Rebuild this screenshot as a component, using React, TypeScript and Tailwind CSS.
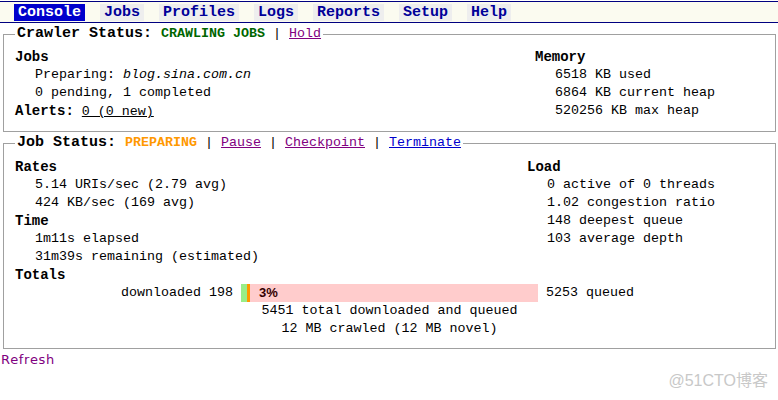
const navItems = ["Console", "Jobs", "Profiles", "Logs", "Reports", "Setup", "Help"];

function Sep() {
  return <span className="text-black font-normal text-[13.333px]"> | </span>;
}

export default function App() {
  return (
    <div className="relative w-[778px] h-[400px] bg-white text-black font-['Liberation_Mono',monospace] text-[13.333px] leading-[18px] overflow-hidden">
      {/* top menu */}
      <div className="mt-[1px] h-[22px] border-y border-[#000080] bg-[#fbfbf0] flex items-end gap-[15px] pl-[14px] pb-[1px]">
        {navItems.map((n, i) => (
          <div
            key={n}
            className={
              i === 0
                ? "h-[17px] px-[4px] bg-[#0000cc] text-white font-bold text-[15px] leading-[17px]"
                : "h-[17px] px-[4px] bg-[#eeeeee] text-[#000099] font-bold text-[15px] leading-[17px]"
            }
          >
            {n}
          </div>
        ))}
      </div>

      {/* crawler status */}
      <fieldset className="mt-[2px] ml-[3px] mr-[2px] border border-[#a0a0a0] px-[11px] pt-[5px] pb-[10px]">
        <legend className="px-[2px] leading-[18px]">
          <span className="font-bold text-[15px]">Crawler Status: </span>
          <span className="font-bold text-[13.333px] text-[#006600]">CRAWLING JOBS</span>
          <Sep />
          <a className="text-[#800080] underline">Hold</a>
        </legend>
        <div className="grid grid-cols-[520px_1fr]">
          <div>
            <div className="font-bold text-[14px]">Jobs</div>
            <div className="pl-[20px]">
              Preparing: <span className="italic">blog.sina.com.cn</span>
            </div>
            <div className="pl-[20px]">0 pending, 1 completed</div>
            <div>
              <span className="font-bold text-[14px]">Alerts:</span>{" "}
              <span className="underline">0 (0 new)</span>
            </div>
          </div>
          <div>
            <div className="font-bold text-[14px]">Memory</div>
            <div className="pl-[20px]">6518 KB used</div>
            <div className="pl-[20px]">6864 KB current heap</div>
            <div className="pl-[20px]">520256 KB max heap</div>
          </div>
        </div>
      </fieldset>

      {/* job status */}
      <fieldset className="mt-[2px] ml-[3px] mr-[2px] border border-[#a0a0a0] px-[11px] pt-[6px] pb-[10px]">
        <legend className="px-[2px] leading-[18px]">
          <span className="font-bold text-[15px]">Job Status: </span>
          <span className="font-bold text-[13.333px] text-[#ff9900]">PREPARING</span>
          <Sep />
          <a className="text-[#800080] underline">Pause</a>
          <Sep />
          <a className="text-[#800080] underline">Checkpoint</a>
          <Sep />
          <a className="text-[#0000cc] underline">Terminate</a>
        </legend>
        <div className="grid grid-cols-[512px_1fr]">
          <div>
            <div className="font-bold text-[14px]">Rates</div>
            <div className="pl-[20px]">5.14 URIs/sec (2.79 avg)</div>
            <div className="pl-[20px]">424 KB/sec (169 avg)</div>
            <div className="font-bold text-[14px]">Time</div>
            <div className="pl-[20px]">1m11s elapsed</div>
            <div className="pl-[20px]">31m39s remaining (estimated)</div>
          </div>
          <div>
            <div className="font-bold text-[14px]">Load</div>
            <div className="pl-[20px]">0 active of 0 threads</div>
            <div className="pl-[20px]">1.02 congestion ratio</div>
            <div className="pl-[20px]">148 deepest queue</div>
            <div className="pl-[20px]">103 average depth</div>
          </div>
        </div>
        <div className="font-bold text-[14px]">Totals</div>
        <div className="flex items-center">
          <div className="w-[226px] text-right pr-[8px]">downloaded 198</div>
          <div className="flex w-[297px] h-[18px]">
            <div className="w-[6px] bg-[#99ee88]" />
            <div className="w-[3px] bg-[#ff9900]" />
            <div className="flex-1 bg-[#ffcccc] pl-[9px] font-bold text-[#330000] font-['Liberation_Sans',sans-serif] text-[13px]">
              3%
            </div>
          </div>
          <div className="pl-[8px]">5253 queued</div>
        </div>
        <div className="ml-[226px] w-[297px] text-center">
          <div>5451 total downloaded and queued</div>
          <div>12 MB crawled (12 MB novel)</div>
        </div>
      </fieldset>

      <a className="block mt-[2px] pl-[1px] text-[#800080] font-['DejaVu_Sans',sans-serif] text-[13px] tracking-[0.7px] leading-[18px]">
        Refresh
      </a>

      <div className="absolute right-[10px] top-[371px] text-[#c8c8c8] text-[16px] leading-[20px] font-['Liberation_Sans','Noto_Sans_CJK_SC',sans-serif]">
        @51CTO博客
      </div>
    </div>
  );
}
